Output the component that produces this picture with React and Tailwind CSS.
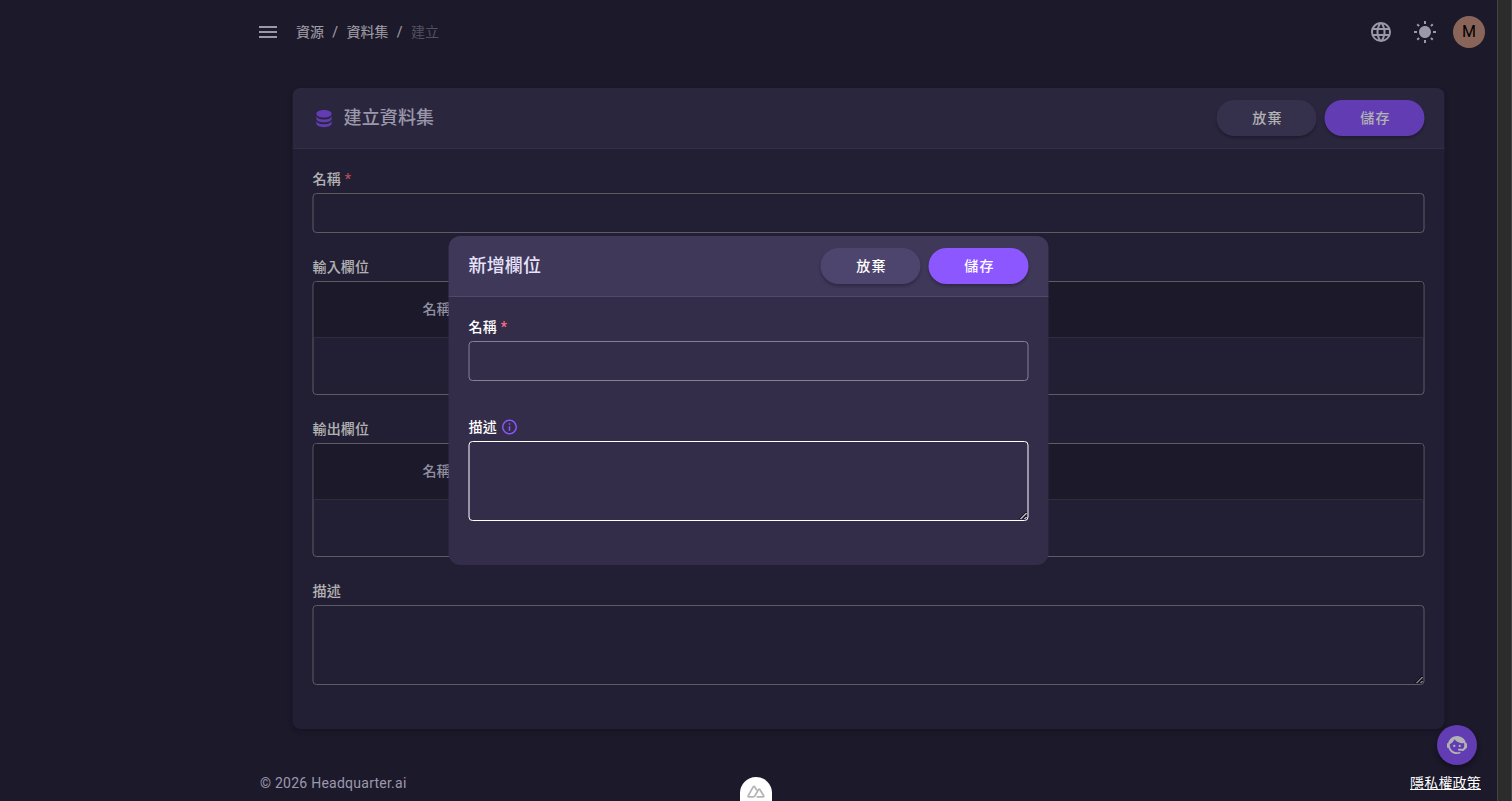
import clsx from 'clsx'

const icons = {
  menu: 'M3,6H21V8H3V6M3,11H21V13H3V11M3,16H21V18H3V16Z',
  web: 'M16.36,14C16.44,13.34 16.5,12.68 16.5,12C16.5,11.32 16.44,10.66 16.36,10H19.74C19.9,10.64 20,11.31 20,12C20,12.69 19.9,13.36 19.74,14M14.59,19.56C15.19,18.45 15.65,17.25 15.97,16H18.92C17.96,17.65 16.43,18.93 14.59,19.56M14.34,14H9.66C9.56,13.34 9.5,12.68 9.5,12C9.5,11.32 9.56,10.65 9.66,10H14.34C14.43,10.65 14.5,11.32 14.5,12C14.5,12.68 14.43,13.34 14.34,14M12,19.96C11.17,18.76 10.5,17.43 10.09,16H13.91C13.5,17.43 12.83,18.76 12,19.96M8,8H5.08C6.03,6.34 7.57,5.06 9.4,4.44C8.8,5.55 8.35,6.75 8,8M5.08,16H8C8.35,17.25 8.8,18.45 9.4,19.56C7.57,18.93 6.03,17.65 5.08,16M4.26,14C4.1,13.36 4,12.69 4,12C4,11.31 4.1,10.64 4.26,10H7.64C7.56,10.66 7.5,11.32 7.5,12C7.5,12.68 7.56,13.34 7.64,14M12,4.03C12.83,5.23 13.5,6.57 13.91,8H10.09C10.5,6.57 11.17,5.23 12,4.03M18.92,8H15.97C15.65,6.75 15.19,5.55 14.59,4.44C16.43,5.07 17.96,6.34 18.92,8M12,2C6.47,2 2,6.5 2,12A10,10 0 0,0 12,22A10,10 0 0,0 22,12A10,10 0 0,0 12,2Z',
  sun: 'M3.55 19.09L4.96 20.5L6.76 18.71L5.34 17.29M12 6C8.69 6 6 8.69 6 12S8.69 18 12 18 18 15.31 18 12C18 8.68 15.31 6 12 6M20 13H23V11H20M17.24 18.71L19.04 20.5L20.45 19.09L18.66 17.29M20.45 5L19.04 3.6L17.24 5.39L18.66 6.81M13 1H11V4H13M6.76 5.39L4.96 3.6L3.55 5L5.34 6.81L6.76 5.39M1 13H4V11H1M13 20H11V23H13',
  database: 'M12,3C7.58,3 4,4.79 4,7C4,9.21 7.58,11 12,11C16.42,11 20,9.21 20,7C20,4.79 16.42,3 12,3M4,9V12C4,14.21 7.58,16 12,16C16.42,16 20,14.21 20,12V9C20,11.21 16.42,13 12,13C7.58,13 4,11.21 4,9M4,14V17C4,19.21 7.58,21 12,21C16.42,21 20,19.21 20,17V14C20,16.21 16.42,18 12,18C7.58,18 4,16.21 4,14Z',
  info: 'M11,9H13V7H11M12,20C7.59,20 4,16.41 4,12C4,7.59 7.59,4 12,4C16.41,4 20,7.59 20,12C20,16.41 16.41,20 12,20M12,2A10,10 0 0,0 2,12A10,10 0 0,0 12,22A10,10 0 0,0 22,12A10,10 0 0,0 12,2M11,17H13V11H11V17Z',
  agent: 'M18.72,14.76C19.07,13.91 19.26,13 19.26,12C19.26,11.28 19.15,10.59 18.96,9.95C18.31,10.1 17.63,10.18 16.92,10.18C13.86,10.18 11.15,8.67 9.5,6.34C8.61,8.5 6.91,10.26 4.77,11.22C4.73,11.47 4.73,11.74 4.73,12A7.27,7.27 0 0,0 12,19.27C13.05,19.27 14.06,19.04 14.97,18.63C15.54,19.72 15.8,20.26 15.78,20.26C14.14,20.81 12.87,21.08 12,21.08C9.58,21.08 7.27,20.13 5.57,18.42C4.53,17.38 3.76,16.11 3.33,14.73H2V10.18H3.09C3.93,6.04 7.6,2.92 12,2.92C14.4,2.92 16.71,3.87 18.42,5.58C19.69,6.84 20.54,8.45 20.89,10.18H22V14.67H22V14.69L22,14.73H21.94L18.38,18L13.08,17.4V15.73H17.91L18.72,14.76M9.27,11.77C9.57,11.77 9.86,11.89 10.07,12.11C10.28,12.32 10.4,12.61 10.4,12.91C10.4,13.21 10.28,13.5 10.07,13.71C9.86,13.92 9.57,14.04 9.27,14.04C8.64,14.04 8.13,13.54 8.13,12.91C8.13,12.28 8.64,11.77 9.27,11.77M14.72,11.77C15.35,11.77 15.85,12.28 15.85,12.91C15.85,13.54 15.35,14.04 14.72,14.04C14.09,14.04 13.58,13.54 13.58,12.91A1.14,1.14 0 0,1 14.72,11.77Z',
}

const Icon = ({ name, className }) => (
  <svg viewBox="0 0 24 24" fill="currentColor" className={clsx('shrink-0', className)}>
    <path d={icons[name]} />
  </svg>
)

const Button = ({ primary, children }) => (
  <button
    className={clsx(
      'w-[100px] h-9 pl-[2px] rounded-full text-sm font-medium tracking-[1.25px] text-white shadow-[0_2px_3px_rgba(19,17,32,0.4)]',
      primary ? 'bg-[#8c57ff]' : 'bg-[#4d456e]'
    )}
  >
    {children}
  </button>
)

const Label = ({ required, info, children }) => (
  <label className="flex items-center h-5 mb-1 text-sm font-medium tracking-[0.15px] text-white">
    {children}
    {required && <span className="ml-1 text-[#ff6e85]">*</span>}
    {info && <Icon name="info" className="w-[18px] h-[18px] ml-1 text-[#8c57ff]" />}
  </label>
)

const FieldTable = ({ label }) => (
  <div className="h-[138px] mb-6">
    <Label>{label}</Label>
    <div className="h-[114px] border border-[#86838f] rounded overflow-hidden">
      <div className="h-14 bg-[#28243d] border-b border-[#433f58] pl-[109px] pb-[2px] flex items-center text-sm font-medium text-[#d0cde2]">
        名稱
      </div>
    </div>
  </div>
)

const App = () => {
  return (
    <div className="flex w-full h-[801px] overflow-hidden bg-[#28243d] font-['Roboto','Noto_Sans_CJK_TC',sans-serif]">
      <div className="relative flex-1 pl-[240px] flex flex-col">
        <header className="h-16 px-3 pl-4 flex items-center text-[#dedaf3]">
          <Icon name="menu" className="w-6 h-6" />
          <nav className="ml-4 flex items-center text-sm text-[#e8e5f0]">
            <span>資源</span>
            <span className="w-[22.5px] text-center">/</span>
            <span>資料集</span>
            <span className="w-[22.5px] text-center">/</span>
            <span className="text-[#77738a]">建立</span>
          </nav>
          <div className="ml-auto flex items-center">
            <Icon name="web" className="w-6 h-6 mr-5" />
            <Icon name="sun" className="w-6 h-6 mr-4" />
            <div className="w-8 h-8 rounded-full bg-[#c49080] text-black text-base flex items-center justify-center">M</div>
          </div>
        </header>

        <main className="w-[1152px] h-[641px] mt-6 ml-[53px] -translate-x-[0.5px] rounded-lg bg-[#312d4b] overflow-hidden shadow-[0_2px_4px_rgba(19,17,32,0.4)]">
          <div className="h-[61px] px-5 flex items-center gap-2 bg-[#3d3759] border-b border-[#4a4664]">
            <Icon name="database" className="w-[23px] h-[23px] text-[#8c57ff]" />
            <h1 className="text-lg font-medium tracking-[0.15px] text-[#dedaf3]">建立資料集</h1>
            <div className="ml-auto flex gap-2">
              <Button>放棄</Button>
              <Button primary>儲存</Button>
            </div>
          </div>
          <div className="px-5 pt-5">
            <div className="h-16 mb-6">
              <Label required>名稱</Label>
              <input className="block w-full h-10 border border-[#86838f] rounded" />
            </div>
            <FieldTable label="輸入欄位" />
            <FieldTable label="輸出欄位" />
            <Label>描述</Label>
            <textarea className="block w-full h-20 border border-[#86838f] rounded" />
          </div>
        </main>

        <footer className="mt-auto h-9 pl-5 flex items-center text-sm tracking-[0.25px] text-[#dedaf3]">© 2026 Headquarter.ai</footer>

        {/* support chat */}
        <button className="absolute right-5 bottom-9 w-10 h-10 rounded-full bg-[#8c57ff] text-white flex items-center justify-center shadow-[0_3px_5px_rgba(19,17,32,0.6)]">
          <Icon name="agent" className="w-6 h-6" />
        </button>

        {/* dialog */}
        <div className="absolute inset-0 bg-black/30 flex items-center pl-[449px]">
          <div className="w-[600px] h-[329px] -translate-x-[0.5px] rounded-xl bg-[#332d4a] overflow-hidden">
            <div className="h-[61px] px-5 flex items-center gap-2 bg-[#3f3859] border-b border-[#4f4a67]">
              <h2 className="text-lg font-medium tracking-[0.15px] text-[#e7e3fc]">新增欄位</h2>
              <div className="ml-auto flex gap-2">
                <Button>放棄</Button>
                <Button primary>儲存</Button>
              </div>
            </div>
            <div className="px-5 pt-5">
              <div className="h-[100px]">
                <Label required>名稱</Label>
                <input className="block w-full h-10 border border-[#858193] rounded" />
              </div>
              <Label info>描述</Label>
              <textarea className="block w-full h-20 border border-white rounded" />
            </div>
          </div>
        </div>

        <a className="absolute right-4 bottom-2 text-sm tracking-[0.2px] text-white underline">隱私權政策</a>

        {/* devtools handle */}
        <div className="absolute left-[740px] bottom-0 w-8 h-6 rounded-t-full bg-white flex justify-center pt-[8px]">
          <svg viewBox="0 0 18 13" className="w-[18px] h-[13px]" fill="none" stroke="#b5b5b5" strokeWidth="1.8" strokeLinejoin="round" strokeLinecap="round">
            <path d="M6.2 11.8H2Q.7 11.8 1.3 10.6L6.2 1.9Q7 .7 7.8 1.9L9.3 4.6M6.2 11.8Q7.4 11.8 8 10.6L11.4 4.7Q12.2 3.5 13 4.7L16.6 10.6Q17.2 11.8 16 11.8H10.2" />
          </svg>
        </div>
      </div>

      {/* scroll track */}
      <div className="w-[15px] h-full bg-[#2c2c2c] border-x border-[#444]" />
    </div>
  )
}

export default App
